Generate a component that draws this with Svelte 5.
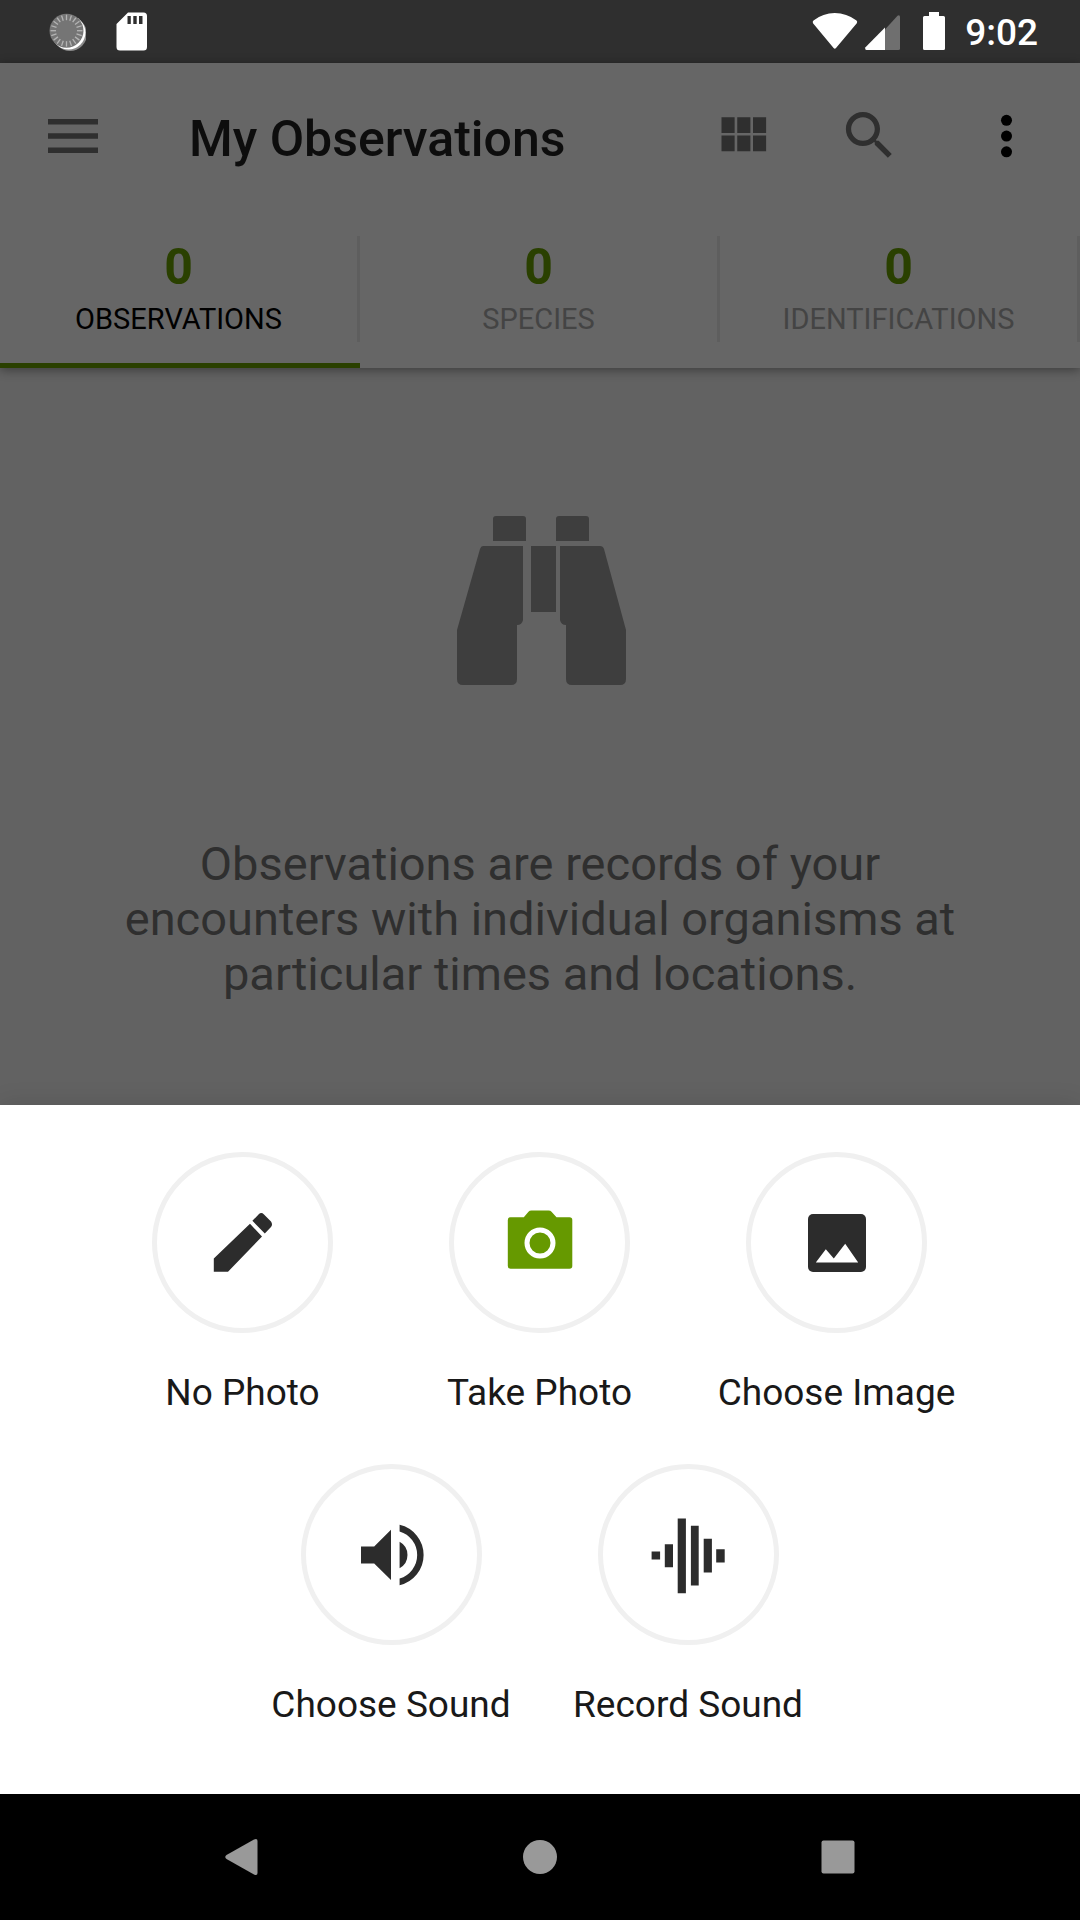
<script>
  const tabs = [
    { count: 0, label: 'OBSERVATIONS', active: true },
    { count: 0, label: 'SPECIES', active: false },
    { count: 0, label: 'IDENTIFICATIONS', active: false }
  ];

  const actions = [
    { id: 'none', label: 'No Photo' },
    { id: 'camera', label: 'Take Photo' },
    { id: 'image', label: 'Choose Image' },
    { id: 'sound', label: 'Choose Sound' },
    { id: 'record', label: 'Record Sound' }
  ];

  const ticks = Array.from({ length: 20 }, (_, i) => i * 18);
</script>

<div class="screen">
  <div class="status">
    <div class="group notices">
      <svg width="38" height="40" viewBox="48 11 38 40" aria-hidden="true">
        <circle cx="70" cy="33" r="17" fill="#8a8a8a" />
        <circle cx="68.500" cy="31.500" r="17" fill="#fff" />
        <circle cx="66.500" cy="29.700" r="17" fill="#757575" />
        {#each ticks as angle}
          <path d="M66.500 13.700v5.500" stroke="#b4b4b4" stroke-width="1.300" transform="rotate({angle} 66.500 29.700)" />
        {/each}
      </svg>
      <svg width="32" height="40" viewBox="116 12 32 40" aria-hidden="true">
        <path fill="#fff" fill-rule="evenodd" d="M128 12.500h15.500a3.500 3.500 0 0 1 3.500 3.500v31a3.500 3.500 0 0 1-3.500 3.500H120a3.500 3.500 0 0 1-3.500-3.500V24zM127.500 16v8h3.300v-8zM133.300 16v8h3.400v-8zM139 16v8h3.500v-8z" />
      </svg>
    </div>
    <div class="group">
      <svg width="136" height="40" viewBox="811 12 136 40" aria-hidden="true">
        <path fill="#fff" d="M813.500 20.500Q823 13 834.800 13T856.500 20.500Q857.800 21.800 856.800 23.200L836 48Q834.800 49.500 833.600 48L813 23.200Q812.200 21.800 813.500 20.500z" />
        <path fill="#6f6f6f" d="M885 29.500L897.500 15.700Q900 14.500 900 17V48.500Q900 50 898.500 50H885z" />
        <path fill="#fff" d="M885 27.500V50H866.500Q864.500 49.500 865.500 47.200z" />
        <path fill="#fff" d="M929 12h10v4h4.500a1.500 1.500 0 0 1 1.500 1.500v31a1.500 1.500 0 0 1-1.500 1.500h-19a1.500 1.500 0 0 1-1.500-1.500v-31a1.500 1.500 0 0 1 1.500-1.500h4.500z" />
      </svg>
      <time>9:02</time>
    </div>
  </div>

  <header>
    <div class="toolbar">
      <button class="tool menu" aria-label="Open menu">
        <svg width="50" height="36" viewBox="0 0 50 36"><path d="M0 1h50v5.500H0zM0 15.200h50v5.500H0zM0 29.400h50v5.500H0z" /></svg>
      </button>
      <h1>My Observations</h1>
      <button class="tool" aria-label="Grid view">
        <svg width="63" height="63" viewBox="0 0 24 24"><path d="M4 11h5V5H4v6zm0 7h5v-6H4v6zm6 0h5v-6h-5v6zm6 0h5v-6h-5v6zm-6-7h5V5h-5v6zm6-6v6h5V5h-5z" /></svg>
      </button>
      <button class="tool" aria-label="Search">
        <svg width="63" height="63" viewBox="0 0 24 24"><path d="M15.500 14h-.79l-.28-.27C15.410 12.590 16 11.110 16 9.500 16 5.910 13.090 3 9.500 3S3 5.910 3 9.500 5.910 16 9.500 16c1.610 0 3.090-.59 4.230-1.570l.27.28v.79l5 4.990L20.490 19l-4.990-5zm-6 0C7.010 14 5 11.990 5 9.500S7.010 5 9.500 5 14 7.010 14 9.500 11.990 14 9.500 14z" /></svg>
      </button>
      <button class="tool more" aria-label="More options">
        <svg width="63" height="63" viewBox="0 0 24 24"><circle cx="12" cy="6.200" r="2.100" /><circle cx="12" cy="12.200" r="2.100" /><circle cx="12" cy="18.200" r="2.100" /></svg>
      </button>
    </div>
    <nav class="tabs">
      {#each tabs as tab}
        <button class="tab" class:active={tab.active}>
          <span class="cell">
            <span class="count">{tab.count}</span>
            <span class="name">{tab.label}</span>
          </span>
        </button>
      {/each}
    </nav>
  </header>

  <main>
    <svg width="174" height="170" viewBox="-4 0 174 170" aria-hidden="true">
      <g fill="#3e3e3e">
        <path d="M39 0h27q3 0 3 3v22H36V3q0-3 3-3zM102 0h27q3 0 3 3v22H99V3q0-3 3-3z" />
        <path d="M74 30h25v66H74z" />
        <path d="M26 30h40v74q-1 5-6 5v54q0 6-6 6H6q-6 0-6-6v-49L23 33q1-3 3-3z" />
        <path d="M104 30h39q3 0 4 3l22 81v49q0 6-6 6h-48q-6 0-6-6v-54q-5 0-6-5V30z" />
      </g>
    </svg>
    <p>Observations are records of your encounters with individual organisms at particular times and locations.</p>
  </main>

  <section class="sheet" aria-label="Add an observation">
    {#each actions as action}
      <button class="action">
        <span class="ring">
          <svg width="90" height="90" viewBox="-45 -45 90 90" aria-hidden="true">
            {#if action.id === 'none'}
              <path d="M-29.200 15.500V28.800H-15L19-6.500L7-19.200zM9.400-22.200L21.800-9.500L28-16Q30-18.500 28-21.500L21-28.500Q18.400-31 16-29z" />
            {:else if action.id === 'camera'}
              <path class="green" d="M-29.500-25.800H-16.200L-11.500-31.200Q-10.500-32.500-8.500-32.500H8.500Q10.500-32.500 11.500-31.200L16.500-25.800H29.500Q32.300-25.800 32.300-23V23Q32.300 25.800 29.500 25.800H-29.500Q-32.200 25.800-32.200 23V-23Q-32.200-25.800-29.500-25.800z" />
              <circle class="lens" r="13" />
            {:else if action.id === 'image'}
              <rect x="-29" y="-29" width="58" height="58" rx="5" />
              <path class="white" d="M-21.200 19.500L-11.200 6.200L-3.200 15.500L8.200.8L21.200 19.500z" />
            {:else if action.id === 'sound'}
              <path d="M-30-8.500V8.500H-16.800L0 25V-25.300L-16.800-8.500zM8.600-13.200A15 15 0 0 1 8.600 13.200z" />
              <path d="M8.600-30.200A31 31 0 0 1 8.600 30.200V23.500A24.500 24.500 0 0 0 8.600-23.500z" />
            {:else}
              <path d="M-36.400-3.500h8.500v8h-8.500zM-23.200-10.800h8.200v23h-8.200zM-10.300-36.500h8.200v74.700h-8.200zM2.900-29.200h7.800v59.700h-7.800zM15.700-16.200h8.200v33.700h-8.200zM28.200-5.800h8.500v13.300h-8.500z" />
            {/if}
          </svg>
        </span>
        <span class="caption">{action.label}</span>
      </button>
    {/each}
  </section>

  <nav class="system" aria-label="System navigation">
    <button aria-label="Back">
      <svg width="40" height="40" viewBox="-20 -20 40 40"><path d="M-15.500 2Q-18 0-15.500-2L12-17.500Q15.500-19 15.500-16V16Q15.500 19 12 17.500z" /></svg>
    </button>
    <button aria-label="Home">
      <svg width="40" height="40" viewBox="-20 -20 40 40"><circle r="17" /></svg>
    </button>
    <button aria-label="Recent apps">
      <svg width="40" height="40" viewBox="-20 -20 40 40"><rect x="-16.500" y="-16.500" width="33" height="33" rx="2" /></svg>
    </button>
  </nav>
</div>

<style>
  :global(body) {
    margin: 0;
    background: #000;
  }

  .screen {
    display: flex;
    flex-direction: column;
    min-height: 100vh;
    background: #626262;
    font-family: Roboto, 'Liberation Sans', sans-serif;
  }

  button {
    margin: 0;
    padding: 0;
    border: 0;
    background: none;
    font: inherit;
    cursor: pointer;
  }

  svg {
    display: block;
    flex: none;
  }

  .status {
    display: flex;
    align-items: center;
    justify-content: space-between;
    height: 63px;
    padding: 0 42px 0 48px;
    background: #2f2f2f;
    color: #fff;
  }

  .group {
    display: flex;
    align-items: center;
    gap: 18px;
  }

  .notices {
    gap: 30px;
  }

  time {
    padding-top: 3px;
    font-size: 37px;
    font-weight: 500;
    line-height: 40px;
  }

  header {
    background: #666;
    box-shadow: 0 2px 10px rgba(0, 0, 0, 0.4);
  }

  .toolbar {
    display: flex;
    align-items: center;
    gap: 64px;
    height: 145px;
    padding: 0 42px 2px 48px;
  }

  .tool {
    fill: #2f2f2f;
  }

  .menu {
    margin-right: 27px;
  }

  .more {
    margin-left: 10px;
    fill: #000;
  }

  h1 {
    flex: 1;
    margin: 0;
    padding-top: 6px;
    color: #0d0d0d;
    font-size: 50px;
    font-weight: 500;
    line-height: 60px;
  }

  .tabs {
    display: grid;
    grid-template-columns: repeat(3, 1fr);
  }

  .tab {
    display: block;
    padding: 26px 0 21px;
    border-bottom: 5px solid transparent;
    color: #444;
  }

  .cell {
    display: flex;
    flex-direction: column;
    height: 106px;
    border-right: 3px solid #5e5e5e;
  }

  .active {
    border-color: #2a4000;
    color: #000;
  }

  .count {
    padding-top: 1px;
    color: #2a4000;
    font-size: 50px;
    font-weight: 700;
    line-height: 60px;
  }

  .name {
    padding-top: 2px;
    font-size: 29px;
    line-height: 40px;
  }

  main {
    display: flex;
    flex: 1;
    flex-direction: column;
    align-items: center;
    gap: 150px;
    padding: 148px 100px 0;
  }

  p {
    max-width: 860px;
    margin: 0;
    color: #2f2f2f;
    font-size: 47px;
    line-height: 55px;
    text-align: center;
  }

  .sheet {
    display: flex;
    flex-wrap: wrap;
    justify-content: center;
    row-gap: 49px;
    padding: 47px 95px 67px 94px;
    background: #fff;
    box-shadow: 0 0 24px rgba(0, 0, 0, 0.12);
  }

  .action {
    display: flex;
    flex-direction: column;
    align-items: center;
    gap: 38px;
    width: 297px;
  }

  .ring {
    display: flex;
    align-items: center;
    justify-content: center;
    box-sizing: border-box;
    width: 181px;
    height: 181px;
    border: 5px solid #f0f0f0;
    border-radius: 50%;
    fill: #2c2c2c;
  }

  .green {
    fill: #690;
  }

  .white {
    fill: #fff;
  }

  .lens {
    fill: none;
    stroke: #fff;
    stroke-width: 5px;
  }

  .caption {
    color: #191919;
    font-size: 37px;
    line-height: 44px;
  }

  .system {
    display: flex;
    align-items: center;
    justify-content: center;
    gap: 258px;
    height: 126px;
    padding-right: 1px;
    background: #000;
    fill: #999;
  }
</style>
